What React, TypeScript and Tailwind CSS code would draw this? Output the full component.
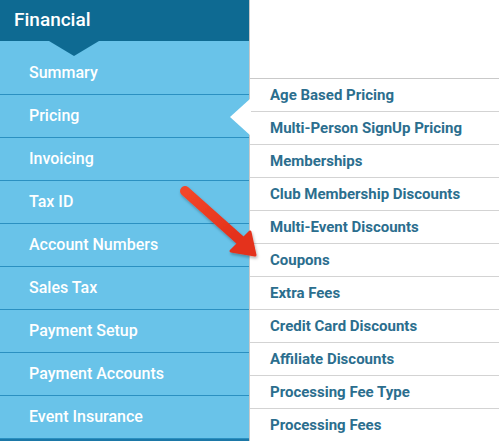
import React from 'react';

const sideItems = ['Summary', 'Pricing', 'Invoicing', 'Tax ID', 'Account Numbers', 'Sales Tax', 'Payment Setup', 'Payment Accounts', 'Event Insurance'];

const subItems = ['Age Based Pricing', 'Multi-Person SignUp Pricing', 'Memberships', 'Club Membership Discounts', 'Multi-Event Discounts', 'Coupons', 'Extra Fees', 'Credit Card Discounts', 'Affiliate Discounts', 'Processing Fee Type', 'Processing Fees'];

const App = () => {
  return <div className="relative flex w-[499px] h-[441px] overflow-hidden bg-white" style={{ fontFamily: 'Roboto, "Liberation Sans", sans-serif' }}>
      {/* Sidebar */}
      <div className="w-[249px] shrink-0 flex flex-col bg-[#69c3e9]">
        <div className="relative h-[41px] shrink-0 bg-[#0e6a92] flex items-center pl-[14px] text-white text-[19px] font-medium">
          Financial
          <div className="absolute left-[49px] top-[41px] w-0 h-0 border-l-[25px] border-r-[25px] border-t-[15px] border-l-transparent border-r-transparent border-t-[#0e6a92]" />
        </div>
        {sideItems.map((item, i) => <div key={item} className={`relative shrink-0 flex items-center pl-[29px] text-white text-[16px] font-medium border-b border-[#2b90c1] ${i === 0 ? 'h-[54px] pt-[10px]' : 'h-[43px]'}`}>
            {item}
            {item === 'Pricing' && <div className="absolute left-[230px] top-[3px] z-10 w-0 h-0 border-t-[19px] border-b-[19px] border-r-[21px] border-t-transparent border-b-transparent border-r-white" />}
          </div>)}
        <div className="flex-1 bg-[#1b78a7]" />
      </div>

      {/* Right side */}
      <div className="flex-1 flex flex-col border-l border-[#c9c9c9]">
        <div className="h-[78px] shrink-0" />
        <div className="flex flex-col border-t border-[#c9c9c9]">
          {subItems.map(item => <div key={item} className="h-[33px] shrink-0 flex items-center pl-[20px] border-b border-[#d3d3d3] text-[15px] font-bold text-[#2b6e8e]">
              {item}
            </div>)}
        </div>
      </div>

      {/* Red arrow annotation */}
      <svg className="absolute left-0 top-0 pointer-events-none" width="499" height="441">
        <defs>
          <linearGradient id="arrowFill" x1="0" y1="0" x2="1" y2="1">
            <stop offset="0" stopColor="#f3472a" />
            <stop offset="1" stopColor="#e2301a" />
          </linearGradient>
          <filter id="arrowShadow" x="-20%" y="-20%" width="140%" height="140%">
            <feDropShadow dx="1" dy="2" stdDeviation="1.5" floodColor="#000" floodOpacity="0.3" />
          </filter>
        </defs>
        <g filter="url(#arrowShadow)">
          <line x1="185" y1="191" x2="240" y2="240" stroke="url(#arrowFill)" strokeWidth="10" strokeLinecap="round" />
          <polygon points="255,255 250,232 231,251" fill="#e4321c" stroke="#e4321c" strokeWidth="3" strokeLinejoin="round" />
        </g>
      </svg>
    </div>;
};

export default App;
